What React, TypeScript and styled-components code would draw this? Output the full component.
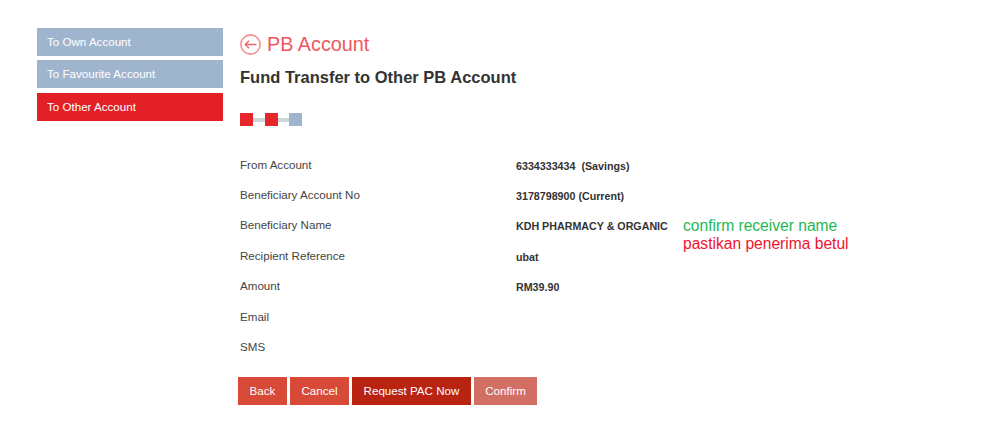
import React from "react";
import styled, { createGlobalStyle } from "styled-components";

const GlobalStyle = createGlobalStyle`
  html, body {
    margin: 0;
    padding: 0;
    background: #fff;
    font-family: "Liberation Sans", Arial, sans-serif;
  }
`;

const Page = styled.div`
  display: flex;
  align-items: flex-start;
  width: 1003px;
  height: 435px;
  padding: 28px 0 0 37px;
  box-sizing: border-box;
  overflow: hidden;
`;

const Sidebar = styled.nav`
  display: flex;
  flex-direction: column;
  width: 186px;
  margin-right: 17px;
`;

const SideItem = styled.a<{ $active?: boolean }>`
  display: block;
  height: 28px;
  line-height: 28px;
  padding-left: 10px;
  margin-top: ${(p) => (p.$active ? "5px" : "0")};
  margin-bottom: ${(p) => (p.$active ? "0" : "4px")};
  font-size: 11.6px;
  color: #fff;
  background: ${(p) => (p.$active ? "#e22025" : "#9fb5ce")};

  &:nth-child(2) {
    margin-bottom: 0;
  }
`;

const Main = styled.main`
  display: flex;
  flex-direction: column;
  flex: 1;
`;

const Heading = styled.div`
  display: flex;
  align-items: center;
  gap: 6px;
  height: 32px;
  color: #f0565b;
  font-size: 19.8px;
`;

const Title = styled.h1`
  margin: 7px 0 0;
  font-size: 16.5px;
  line-height: 20px;
  font-weight: 700;
  color: #333;
`;

const Steps = styled.div`
  display: flex;
  align-items: center;
  margin-top: 26px;
`;

const StepBox = styled.span<{ $done?: boolean }>`
  width: 13px;
  height: 13px;
  background: ${(p) => (p.$done ? "#e7262c" : "#9fb5ce")};
`;

const StepLine = styled.span`
  width: 11.5px;
  height: 4px;
  background: #c9d5d6;
`;

const Rows = styled.div`
  display: flex;
  flex-direction: column;
  margin-top: 23px;
`;

const Row = styled.div`
  position: relative;
  display: flex;
  align-items: center;
  height: 30.4px;
`;

const Label = styled.div`
  width: 276px;
  font-size: 11.6px;
  color: #444;
`;

const Value = styled.div`
  margin-top: 3px;
  font-size: 10.7px;
  font-weight: 700;
  color: #333;
`;

const Note = styled.div`
  position: absolute;
  left: 443px;
  top: 7px;
  font-size: 15.6px;
  line-height: 18px;
`;

const NoteLine = styled.div<{ $color: string }>`
  color: ${(p) => p.$color};
`;

const Actions = styled.div`
  display: flex;
  gap: 3px;
  margin: 15px 0 0 -2px;
`;

const ActionButton = styled.button<{ $bg: string; $w: number }>`
  width: ${(p) => p.$w}px;
  height: 28px;
  padding: 0;
  border: 0;
  font: 11.6px "Liberation Sans", Arial, sans-serif;
  color: #fff;
  background: ${(p) => p.$bg};
`;

const rows = [
  ["From Account", "6334333434\u00a0\u00a0(Savings)"],
  ["Beneficiary Account No", "3178798900 (Current)"],
  ["Beneficiary Name", "KDH PHARMACY & ORGANIC"],
  ["Recipient Reference", "ubat"],
  ["Amount", "RM39.90"],
  ["Email", ""],
  ["SMS", ""],
];

export default function App() {
  return (
    <Page>
      <GlobalStyle />
      <Sidebar>
        <SideItem>To Own Account</SideItem>
        <SideItem>To Favourite Account</SideItem>
        <SideItem $active>To Other Account</SideItem>
      </Sidebar>
      <Main>
        <Heading>
          <svg width="21" height="21" viewBox="0 0 21 21" fill="none">
            <circle cx="10.5" cy="10.5" r="9.6" stroke="#f58f92" strokeWidth="1.6" />
            <path d="M16.5 10.5H5M9 6.7l-3.8 3.8L9 14.3" stroke="#f0656a" strokeWidth="1.3" />
          </svg>
          PB Account
        </Heading>
        <Title>Fund Transfer to Other PB Account</Title>
        <Steps>
          <StepBox $done />
          <StepLine />
          <StepBox $done />
          <StepLine />
          <StepBox />
        </Steps>
        <Rows>
          {rows.map(([label, value]) => (
            <Row key={label}>
              <Label>{label}</Label>
              <Value>{value}</Value>
              {label === "Beneficiary Name" && (
                <Note>
                  <NoteLine $color="#1db954">confirm receiver name</NoteLine>
                  <NoteLine $color="#f0142d">pastikan penerima betul</NoteLine>
                </Note>
              )}
            </Row>
          ))}
        </Rows>
        <Actions>
          <ActionButton $bg="#d84a38" $w={49}>Back</ActionButton>
          <ActionButton $bg="#d84a38" $w={59}>Cancel</ActionButton>
          <ActionButton $bg="#b92312" $w={119}>Request PAC Now</ActionButton>
          <ActionButton $bg="#d26f64" $w={63}>Confirm</ActionButton>
        </Actions>
      </Main>
    </Page>
  );
}
